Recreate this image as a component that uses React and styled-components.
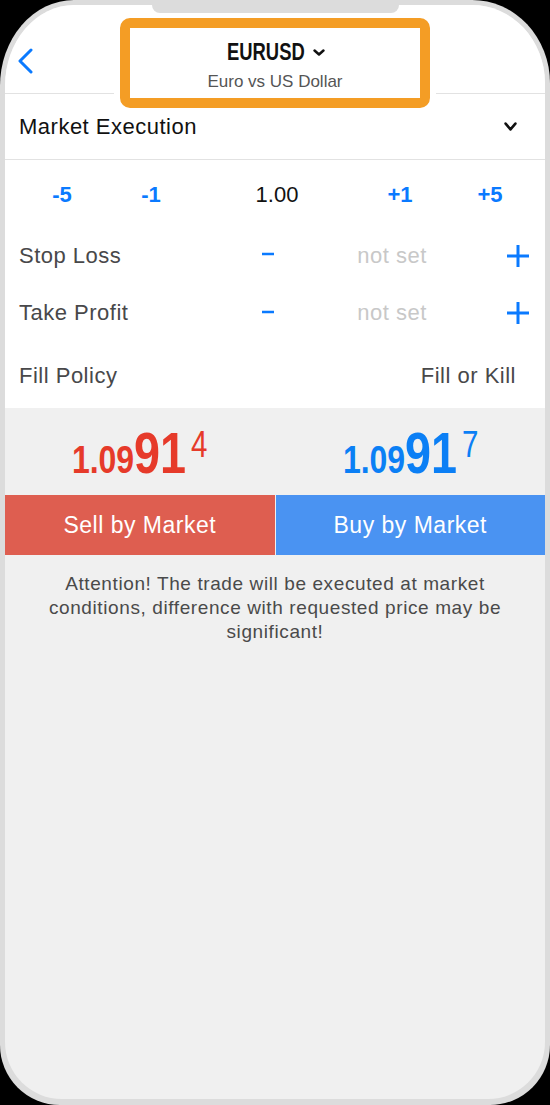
import React from "react";
import styled, { createGlobalStyle } from "styled-components";

const GlobalStyle = createGlobalStyle`
  html, body { margin: 0; padding: 0; background: #000; }
  body { font-family: "Liberation Sans", Arial, sans-serif; }
  #root { width: 550px; height: 1105px; }
`;

const BLUE = "#0a7aff";
const SANS = `"Liberation Sans", Arial, sans-serif`;

const Phone = styled.div`
  position: relative;
  box-sizing: border-box;
  width: 550px;
  height: 1105px;
  padding: 5px 5px 6px;
  background: #dcdcdc;
  border-radius: 74px 78px 60px 60px / 86px 83px 60px 60px;
  display: flex;
`;

const Notch = styled.div`
  position: absolute;
  top: 0;
  left: 152px;
  width: 247px;
  height: 13px;
  background: #dcdcdc;
  border-radius: 0 0 8px 8px;
  z-index: 3;
`;

const Screen = styled.div`
  position: relative;
  flex: 1;
  background: #f0f0f0;
  border-radius: 69px 73px 57px 57px / 81px 78px 57px 57px;
  overflow: hidden;
  display: flex;
  flex-direction: column;
`;

const Sheet = styled.div`
  background: #fff;
  display: flex;
  flex-direction: column;
`;

const Header = styled.header`
  position: relative;
  display: grid;
  grid-template-columns: 1fr auto 1fr;
  align-items: start;
  box-sizing: border-box;
  height: 89px;
  padding-top: 33px;
  border-bottom: 1px solid #e2e2e2;
`;

const BackButton = styled.div`
  justify-self: start;
  margin: 10px 0 0 12px;
  width: 16px;
  height: 26px;
  display: flex;
`;

const OrangeFrame = styled.div`
  position: absolute;
  left: 115px;
  top: 13px;
  width: 310px;
  height: 90px;
  box-sizing: border-box;
  border: 10px solid #f49d25;
  border-radius: 10px;
  background: #fff;
  box-shadow: 0 0 0 6px #fff;
  z-index: 1;
`;

const TitleBlock = styled.div`
  position: relative;
  z-index: 2;
  display: flex;
  flex-direction: column;
  align-items: center;
`;

const TitleRow = styled.div`
  display: flex;
  align-items: center;
  gap: 8px;
  padding-left: 2px;
`;

/* condensed face: the narrow cut is drawn by squeezing Liberation Sans */
const Symbol = styled.span`
  display: inline-block;
  font-family: ${SANS};
  font-weight: 700;
  font-size: 23px;
  line-height: 28px;
  color: #111;
  transform: scaleX(0.8);
  transform-origin: left center;
  margin-right: -19px;
`;

const Subtitle = styled.span`
  margin-top: 5px;
  font-size: 17px;
  line-height: 22px;
  color: #555;
`;

const SelectRow = styled.div`
  box-sizing: border-box;
  height: 66px;
  display: flex;
  align-items: center;
  justify-content: space-between;
  padding: 0 28px 0 14px;
  border-bottom: 1px solid #e2e2e2;
  font-size: 22px;
  letter-spacing: 0.5px;
  color: #111;
`;

const LotRow = styled.div`
  height: 69px;
  display: grid;
  grid-template-columns: 90px 88px 164px 82px 98px;
  padding-left: 12px;
  align-items: center;
  justify-items: center;
`;

const Step = styled.span`
  font-size: 22px;
  font-weight: 700;
  color: ${BLUE};
`;

const Volume = styled.span`
  font-size: 22px;
  color: #111;
`;

const ParamRow = styled.div`
  height: ${(p) => p.$h}px;
  display: grid;
  grid-template-columns: 224px 50px 198px 1fr;
  align-items: center;
  justify-items: center;
  padding-left: 14px;
`;

const Label = styled.span`
  justify-self: start;
  font-size: 22px;
  letter-spacing: 0.5px;
  color: #48484a;
`;

const NotSet = styled.span`
  font-size: 22px;
  letter-spacing: 0.5px;
  color: #c8c8c8;
`;

const IconBox = styled.span`
  display: flex;
  transform: translateY(${(p) => p.$dy || 0}px);
`;

const FillRow = styled.div`
  height: 64px;
  display: flex;
  align-items: center;
  justify-content: space-between;
  padding: 0 29px 0 14px;
`;

const Value = styled.span`
  font-size: 22px;
  letter-spacing: 0.5px;
  color: #48484a;
`;

const PricePanel = styled.div`
  height: 87px;
  display: grid;
  grid-template-columns: 1fr 1fr;
  gap: 1px;
`;

const PriceCell = styled.div`
  box-sizing: border-box;
  padding-top: 17px;
  display: flex;
  justify-content: center;
  align-items: flex-start;
`;

const PriceGroup = styled.div`
  display: flex;
  align-items: baseline;
  font-family: ${SANS};
  line-height: 1;
  color: ${(p) => p.$color};
  transform: scaleX(0.82);
  transform-origin: center top;
`;

const PriceSmall = styled.span`
  font-size: 39px;
  font-weight: 700;
`;

const PriceBig = styled.span`
  font-size: 57px;
  font-weight: 700;
`;

const PriceSup = styled.span`
  align-self: flex-start;
  margin: 2px 0 0 6px;
  font-size: 36px;
`;

const ButtonRow = styled.div`
  display: grid;
  grid-template-columns: 1fr 1fr;
  gap: 1px;
`;

const TradeButton = styled.div`
  height: 60px;
  display: flex;
  align-items: center;
  justify-content: center;
  background: ${(p) => p.$bg};
  color: #fff;
  font-size: 23px;
  letter-spacing: 0.5px;
`;

const Notice = styled.p`
  margin: 17px 0 0;
  padding: 0 30px;
  text-align: center;
  font-size: 19px;
  letter-spacing: 0.6px;
  line-height: 24px;
  color: #4a4a4a;
`;

const Chevron = ({ w = 13, h = 9, sw = 2.6, color = "#111" }) => (
  <svg width={w} height={h} viewBox={`0 0 ${w} ${h}`}>
    <path
      d={`M${sw / 2 + 0.3} ${sw / 2 + 0.3} L${w / 2} ${h - sw / 2 - 0.3} L${w - sw / 2 - 0.3} ${sw / 2 + 0.3}`}
      fill="none"
      stroke={color}
      strokeWidth={sw}
      strokeLinecap="round"
      strokeLinejoin="round"
    />
  </svg>
);

const Minus = () => (
  <svg width="12" height="3" viewBox="0 0 12 3">
    <rect x="0" y="0" width="12" height="3" fill={BLUE} />
  </svg>
);

const Plus = () => (
  <svg width="22" height="22" viewBox="0 0 22 22">
    <rect x="0" y="9.5" width="22" height="3" fill={BLUE} />
    <rect x="9.5" y="0" width="3" height="22" fill={BLUE} />
  </svg>
);

const Back = () => (
  <svg width="16" height="26" viewBox="0 0 16 26">
    <path d="M14 2 L3 13 L14 24" fill="none" stroke={BLUE} strokeWidth="3" strokeLinecap="round" strokeLinejoin="round" />
  </svg>
);

const Price = ({ small, big, sup, color }) => (
  <PriceCell>
    <PriceGroup $color={color}>
      <PriceSmall>{small}</PriceSmall>
      <PriceBig>{big}</PriceBig>
      <PriceSup>{sup}</PriceSup>
    </PriceGroup>
  </PriceCell>
);

export default function App() {
  return (
    <>
      <GlobalStyle />
      <Phone>
        <Screen>
          <Sheet>
            <Header>
              <OrangeFrame />
              <BackButton>
                <Back />
              </BackButton>
              <TitleBlock>
                <TitleRow>
                  <Symbol>EURUSD</Symbol>
                  <Chevron w={12} h={7} sw={2.5} />
                </TitleRow>
                <Subtitle>Euro vs US Dollar</Subtitle>
              </TitleBlock>
              <span />
            </Header>
            <SelectRow>
              <span>Market Execution</span>
              <Chevron />
            </SelectRow>
            <LotRow>
              <Step>-5</Step>
              <Step>-1</Step>
              <Volume>1.00</Volume>
              <Step>+1</Step>
              <Step>+5</Step>
            </LotRow>
            <ParamRow $h={53}>
              <Label>Stop Loss</Label>
              <IconBox $dy={-1.5}>
                <Minus />
              </IconBox>
              <NotSet>not set</NotSet>
              <IconBox>
                <Plus />
              </IconBox>
            </ParamRow>
            <ParamRow $h={62}>
              <Label>Take Profit</Label>
              <IconBox $dy={-1.5}>
                <Minus />
              </IconBox>
              <NotSet>not set</NotSet>
              <IconBox>
                <Plus />
              </IconBox>
            </ParamRow>
            <FillRow>
              <Label>Fill Policy</Label>
              <Value>Fill or Kill</Value>
            </FillRow>
          </Sheet>
          <PricePanel>
            <Price small="1.09" big="91" sup="4" color="#e63a2a" />
            <Price small="1.09" big="91" sup="7" color="#0b7ff5" />
          </PricePanel>
          <ButtonRow>
            <TradeButton $bg="#de5e50">Sell by Market</TradeButton>
            <TradeButton $bg="#4a93f2">Buy by Market</TradeButton>
          </ButtonRow>
          <Notice>
            Attention! The trade will be executed at market conditions, difference with requested price may be
            significant!
          </Notice>
        </Screen>
        <Notch />
      </Phone>
    </>
  );
}
